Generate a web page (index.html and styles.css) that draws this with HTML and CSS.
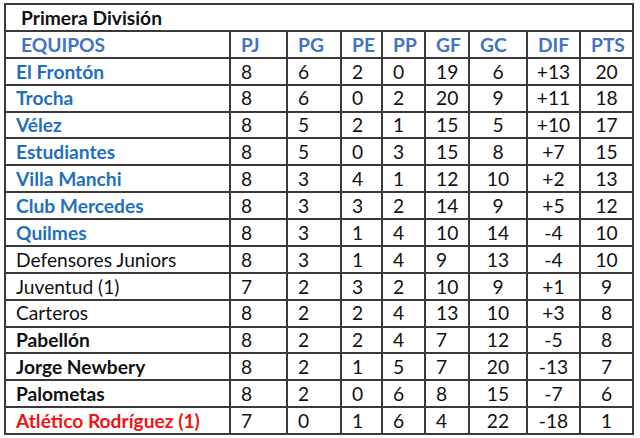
FILE: index.html
```html
<!DOCTYPE html>
<html lang="es">
<head>
<meta charset="utf-8">
<title>Primera División</title>
<link rel="stylesheet" href="styles.css">
</head>
<body>
<table class="standings">
  <colgroup>
    <col class="c-team"><col class="c-pj"><col class="c-pg"><col class="c-pe"><col class="c-pp"><col class="c-gf"><col class="c-gc"><col class="c-dif"><col class="c-pts">
  </colgroup>
  <thead>
    <tr class="title-row"><th colspan="9" class="title">Primera División</th></tr>
    <tr class="head-row">
      <th>EQUIPOS</th><th>PJ</th><th>PG</th><th>PE</th><th>PP</th><th>GF</th><th>GC</th><th>DIF</th><th>PTS</th>
    </tr>
  </thead>
  <tbody>
    <tr><td class="team blue">El Frontón</td><td>8</td><td>6</td><td>2</td><td>0</td><td>19</td><td class="ctr">6</td><td class="ctr">+13</td><td class="ctr">20</td></tr>
    <tr><td class="team blue">Trocha</td><td>8</td><td>6</td><td>0</td><td>2</td><td>20</td><td class="ctr">9</td><td class="ctr">+11</td><td class="ctr">18</td></tr>
    <tr><td class="team blue">Vélez</td><td>8</td><td>5</td><td>2</td><td>1</td><td>15</td><td class="ctr">5</td><td class="ctr">+10</td><td class="ctr">17</td></tr>
    <tr><td class="team blue">Estudiantes</td><td>8</td><td>5</td><td>0</td><td>3</td><td>15</td><td class="ctr">8</td><td class="ctr">+7</td><td class="ctr">15</td></tr>
    <tr><td class="team blue">Villa Manchi</td><td>8</td><td>3</td><td>4</td><td>1</td><td>12</td><td class="ctr">10</td><td class="ctr">+2</td><td class="ctr">13</td></tr>
    <tr><td class="team blue">Club Mercedes</td><td>8</td><td>3</td><td>3</td><td>2</td><td>14</td><td class="ctr">9</td><td class="ctr">+5</td><td class="ctr">12</td></tr>
    <tr><td class="team blue">Quilmes</td><td>8</td><td>3</td><td>1</td><td>4</td><td>10</td><td class="ctr">14</td><td class="ctr">-4</td><td class="ctr">10</td></tr>
    <tr><td class="team">Defensores Juniors</td><td>8</td><td>3</td><td>1</td><td>4</td><td>9</td><td class="ctr">13</td><td class="ctr">-4</td><td class="ctr">10</td></tr>
    <tr><td class="team">Juventud (1)</td><td>7</td><td>2</td><td>3</td><td>2</td><td>10</td><td class="ctr">9</td><td class="ctr">+1</td><td class="ctr">9</td></tr>
    <tr><td class="team">Carteros</td><td>8</td><td>2</td><td>2</td><td>4</td><td>13</td><td class="ctr">10</td><td class="ctr">+3</td><td class="ctr">8</td></tr>
    <tr><td class="team bold">Pabellón</td><td>8</td><td>2</td><td>2</td><td>4</td><td>7</td><td class="ctr">12</td><td class="ctr">-5</td><td class="ctr">8</td></tr>
    <tr><td class="team bold">Jorge Newbery</td><td>8</td><td>2</td><td>1</td><td>5</td><td>7</td><td class="ctr">20</td><td class="ctr">-13</td><td class="ctr">7</td></tr>
    <tr><td class="team bold">Palometas</td><td>8</td><td>2</td><td>0</td><td>6</td><td>8</td><td class="ctr">15</td><td class="ctr">-7</td><td class="ctr">6</td></tr>
    <tr><td class="team red">Atlético Rodríguez (1)</td><td>7</td><td>0</td><td>1</td><td>6</td><td>4</td><td class="ctr">22</td><td class="ctr">-18</td><td class="ctr">1</td></tr>
  </tbody>
</table>
</body>
</html>
```
FILE: styles.css
```css
html, body {
  margin: 0;
  padding: 0;
  background: #ffffff;
}

body {
  padding: 3px 0 0 4px;
  font-family: Lato, "Liberation Sans", sans-serif;
  font-size: 19.2px;
  color: #111111;
}

.standings {
  border-collapse: collapse;
  table-layout: fixed;
  width: 630px;
}

.c-team { width: 225px; }
.c-pj { width: 57px; }
.c-pg { width: 54px; }
.c-pe { width: 41px; }
.c-pp { width: 43px; }
.c-gf { width: 44px; }
.c-gc { width: 58px; }
.c-dif { width: 53px; }
.c-pts { width: 53px; }

.standings th,
.standings td {
  border: 2px solid #3a3a3a;
  height: 26.875px;
  padding: 0 0 0 10px;
  box-sizing: border-box;
  text-align: left;
  vertical-align: middle;
  line-height: 1;
  white-space: nowrap;
  font-weight: 400;
}

.standings .title {
  font-weight: 700;
  color: #111111;
  padding-left: 15px;
}

.head-row th {
  font-weight: 700;
  color: #4472c4;
}

.head-row th:first-child {
  padding-left: 15px;
}

.standings td.team {
  padding-left: 10px;
}

.standings td.ctr {
  text-align: center;
  padding: 0;
}

.standings td.blue {
  color: #1f6fbf;
  font-weight: 700;
}

.standings td.bold {
  font-weight: 700;
}

.standings td.red {
  color: #f01414;
  font-weight: 700;
}
```
